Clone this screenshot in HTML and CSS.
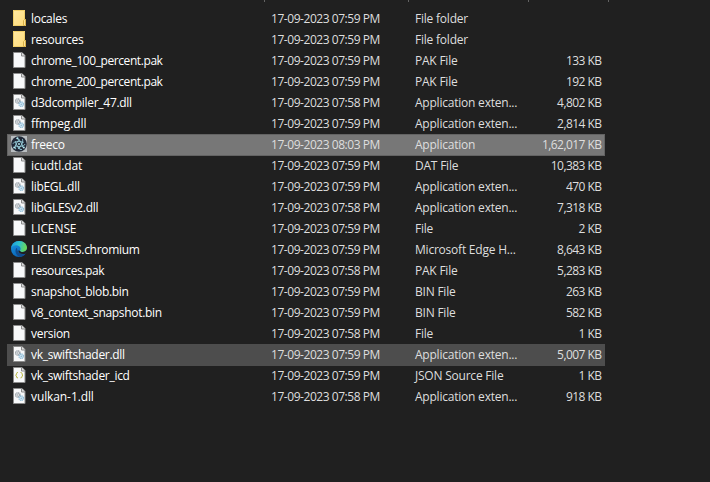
FILE: index.html
```
<!DOCTYPE html>
<html lang="en">
<head>
<meta charset="utf-8">
<title>Files</title>
<link rel="stylesheet" href="styles.css">
</head>
<body>
<svg class="defs" aria-hidden="true">
  <defs>
    <linearGradient id="gold" x1="0" y1="0" x2="1" y2="1"><stop offset="0" stop-color="#ffe9a3"/><stop offset="1" stop-color="#ffdb78"/></linearGradient>
    <linearGradient id="wave" x1="0" y1="0.2" x2="1" y2="0.4"><stop offset="0" stop-color="#1b9de2"/><stop offset=".5" stop-color="#2fc2c9"/><stop offset="1" stop-color="#6edb52"/></linearGradient>
    <linearGradient id="sea" x1="0" y1="0" x2="0.5" y2="1"><stop offset="0" stop-color="#1a9be6"/><stop offset="1" stop-color="#0a62b5"/></linearGradient>
    <symbol id="folder" viewBox="0 0 17 17">
      <path d="M2 0h12v9.500h1v6.500h-13z" fill="url(#gold)"/>
      <path d="M2.500.5v15h10.500M2.500.5h11v9" fill="none" stroke="#f1cf68"/>
      <path d="M12.500 15.500v-5l1-1h1v6z" fill="#ffe594" stroke="#d9b048"/>
    </symbol>
    <symbol id="file" viewBox="0 0 17 17">
      <path d="M2.500.5h8.500l3 3v12h-11.500z" fill="#f8f9fa" stroke="#8b8b8b"/>
      <path d="M10.500.5v3.500h3.500" fill="#dedede" stroke="#8b8b8b"/>
    </symbol>
    <symbol id="dll" viewBox="0 0 17 17">
      <use href="#file"/>
      <circle cx="6.800" cy="7" r="2.200" fill="#e9edf0" stroke="#858d94" stroke-width="1.300" stroke-dasharray="1.100 .5"/>
      <circle cx="6.800" cy="7" r=".7" fill="#8f979e"/>
      <circle cx="10.200" cy="10.200" r="2.200" fill="#d9edf8" stroke="#8ab8d4" stroke-width="1.300" stroke-dasharray="1.100 .5"/>
      <circle cx="10.200" cy="10.200" r=".7" fill="#77a8c6"/>
    </symbol>
    <symbol id="json" viewBox="0 0 17 17">
      <use href="#file"/>
      <path d="M7 5.500q-1.500 0-1.500 1v1l-1 .7 1 .7v1q0 1 1.500 1M9.500 5.500q1.500 0 1.500 1v1l1 .7-1 .7v1q0 1-1.500 1" fill="none" stroke="#b9b73f" stroke-width="1"/>
    </symbol>
    <symbol id="atom" viewBox=".5 0 17 17">
      <rect width="16" height="16" x=".5" fill="#b9bec1"/>
      <circle cx="8.500" cy="8" r="7.800" fill="#202837"/>
      <g fill="none" stroke="#94c9d6" stroke-width=".9">
        <ellipse cx="8.500" cy="8" rx="6" ry="2.500" stroke-dasharray="11 3" transform="rotate(0 8.500 8)"/>
        <ellipse cx="8.500" cy="8" rx="6" ry="2.500" stroke-dasharray="11 3" transform="rotate(60 8.500 8)"/>
        <ellipse cx="8.500" cy="8" rx="6" ry="2.500" stroke-dasharray="11 3" transform="rotate(120 8.500 8)"/>
      </g>
      <g fill="#b8edf5"><circle cx="8.500" cy="8" r=".9"/><circle cx="3.700" cy="11.500" r="1"/><circle cx="13.300" cy="11.500" r="1"/><circle cx="7" cy="2.300" r="1"/></g>
    </symbol>
    <symbol id="edge" viewBox=".5 0 17 17">
      <circle cx="8.500" cy="8" r="8" fill="url(#sea)"/>
      <path d="M.6 7.500C1 3 4.500 0 8.700 0c4.600 0 7.800 3.300 7.800 6.800 0 2.500-1.900 4.200-4.400 4.200-1.600 0-2.700-.7-2.700-1.300 0-.5.700-.8.700-2C10.100 5.700 8 4.300 5.600 4.300 3.300 4.300 1.500 5.500.6 7.500z" fill="url(#wave)"/>
      <path d="M6.500 6.800C4.200 8.300 4.200 13 8.700 15.800c2.800.1 5-1.200 6.500-3.300-3.500 1.700-8.400.5-8.700-5.700z" fill="#114b8d"/>
      <path d="M9.400 9.700c0 .6 1.100 1.300 2.700 1.300 1.800 0 3.400-.9 4.100-2.400l1 .8-1.700 3.100c-3.700 1.300-7.500.2-7.800-3z" fill="#202020"/>
    </symbol>
  </defs>
</svg>
<header class="columns"><span></span><span></span><span></span><span></span></header>
<main class="list">
  <div class="row"><svg class="icon"><use href="#folder"/></svg><span class="name">locales</span><span class="date">17-09-2023 07:59 PM</span><span class="type">File folder</span><span class="size"></span></div>
  <div class="row"><svg class="icon"><use href="#folder"/></svg><span class="name">resources</span><span class="date">17-09-2023 07:59 PM</span><span class="type">File folder</span><span class="size"></span></div>
  <div class="row"><svg class="icon"><use href="#file"/></svg><span class="name tight">chrome_100_percent.pak</span><span class="date">17-09-2023 07:59 PM</span><span class="type">PAK File</span><span class="size">133 KB</span></div>
  <div class="row"><svg class="icon"><use href="#file"/></svg><span class="name tight">chrome_200_percent.pak</span><span class="date">17-09-2023 07:59 PM</span><span class="type">PAK File</span><span class="size">192 KB</span></div>
  <div class="row"><svg class="icon"><use href="#dll"/></svg><span class="name">d3dcompiler_47.dll</span><span class="date">17-09-2023 07:58 PM</span><span class="type">Application exten...</span><span class="size">4,802 KB</span></div>
  <div class="row"><svg class="icon"><use href="#dll"/></svg><span class="name loose">ffmpeg.dll</span><span class="date">17-09-2023 07:59 PM</span><span class="type">Application exten...</span><span class="size">2,814 KB</span></div>
  <div class="row selected"><svg class="icon"><use href="#atom"/></svg><span class="name">freeco</span><span class="date">17-09-2023 08:03 PM</span><span class="type">Application</span><span class="size">1,62,017 KB</span></div>
  <div class="row"><svg class="icon"><use href="#file"/></svg><span class="name loose">icudtl.dat</span><span class="date">17-09-2023 07:59 PM</span><span class="type">DAT File</span><span class="size">10,383 KB</span></div>
  <div class="row"><svg class="icon"><use href="#dll"/></svg><span class="name">libEGL.dll</span><span class="date">17-09-2023 07:59 PM</span><span class="type">Application exten...</span><span class="size">470 KB</span></div>
  <div class="row"><svg class="icon"><use href="#dll"/></svg><span class="name">libGLESv2.dll</span><span class="date">17-09-2023 07:58 PM</span><span class="type">Application exten...</span><span class="size">7,318 KB</span></div>
  <div class="row"><svg class="icon"><use href="#file"/></svg><span class="name loose">LICENSE</span><span class="date">17-09-2023 07:59 PM</span><span class="type">File</span><span class="size">2 KB</span></div>
  <div class="row"><svg class="icon"><use href="#edge"/></svg><span class="name">LICENSES.chromium</span><span class="date">17-09-2023 07:59 PM</span><span class="type">Microsoft Edge H...</span><span class="size">8,643 KB</span></div>
  <div class="row"><svg class="icon"><use href="#file"/></svg><span class="name tight">resources.pak</span><span class="date">17-09-2023 07:58 PM</span><span class="type">PAK File</span><span class="size">5,283 KB</span></div>
  <div class="row"><svg class="icon"><use href="#file"/></svg><span class="name">snapshot_blob.bin</span><span class="date">17-09-2023 07:59 PM</span><span class="type">BIN File</span><span class="size">263 KB</span></div>
  <div class="row"><svg class="icon"><use href="#file"/></svg><span class="name">v8_context_snapshot.bin</span><span class="date">17-09-2023 07:59 PM</span><span class="type">BIN File</span><span class="size">582 KB</span></div>
  <div class="row"><svg class="icon"><use href="#file"/></svg><span class="name">version</span><span class="date">17-09-2023 07:58 PM</span><span class="type">File</span><span class="size">1 KB</span></div>
  <div class="row hovered"><svg class="icon"><use href="#dll"/></svg><span class="name">vk_swiftshader.dll</span><span class="date">17-09-2023 07:59 PM</span><span class="type">Application exten...</span><span class="size">5,007 KB</span></div>
  <div class="row"><svg class="icon"><use href="#json"/></svg><span class="name">vk_swiftshader_icd</span><span class="date">17-09-2023 07:59 PM</span><span class="type">JSON Source File</span><span class="size">1 KB</span></div>
  <div class="row"><svg class="icon"><use href="#dll"/></svg><span class="name loose">vulkan-1.dll</span><span class="date">17-09-2023 07:58 PM</span><span class="type">Application exten...</span><span class="size">918 KB</span></div>
</main>
</body>
</html>
```
FILE: styles.css
```
* { box-sizing: border-box; }
body {
  margin: 0;
  height: 482px;
  overflow: hidden;
  background: #202020;
  font: 12px/20px "Open Sans", "Noto Sans", sans-serif;
}
.defs { position: absolute; width: 0; height: 0; }
.columns {
  display: grid;
  grid-template-columns: 265px 144px 120px 80px;
  height: 2px;
}
.columns span { border-right: 1px solid #636363; }
.list { width: 598px; margin: 6px 0 0 7px; }
.row {
  display: grid;
  grid-template-columns: 24px 240px 144px 110px 1fr;
  height: 22px;
  margin-bottom: -1px;
  padding-right: 3px;
  border: 1px solid transparent;
  border-width: 1px 0;
  color: #dedede;
  white-space: nowrap;
}
.icon { width: 17px; height: 17px; margin: 1px 0 0 4px; }
.name { color: #fff; letter-spacing: -0.3px; }
.tight { letter-spacing: -0.42px; }
.loose { letter-spacing: -0.1px; }
.date { letter-spacing: -0.45px; }
.type { letter-spacing: -0.22px; }
.size { text-align: right; letter-spacing: -0.55px; }
.size::after { content: ""; margin-left: 0.55px; }
.selected { background: #777; border-color: #636363; box-shadow: inset 1px 0 #636363, inset -1px 0 #636363; }
.hovered { background: #4d4d4d; }
```
